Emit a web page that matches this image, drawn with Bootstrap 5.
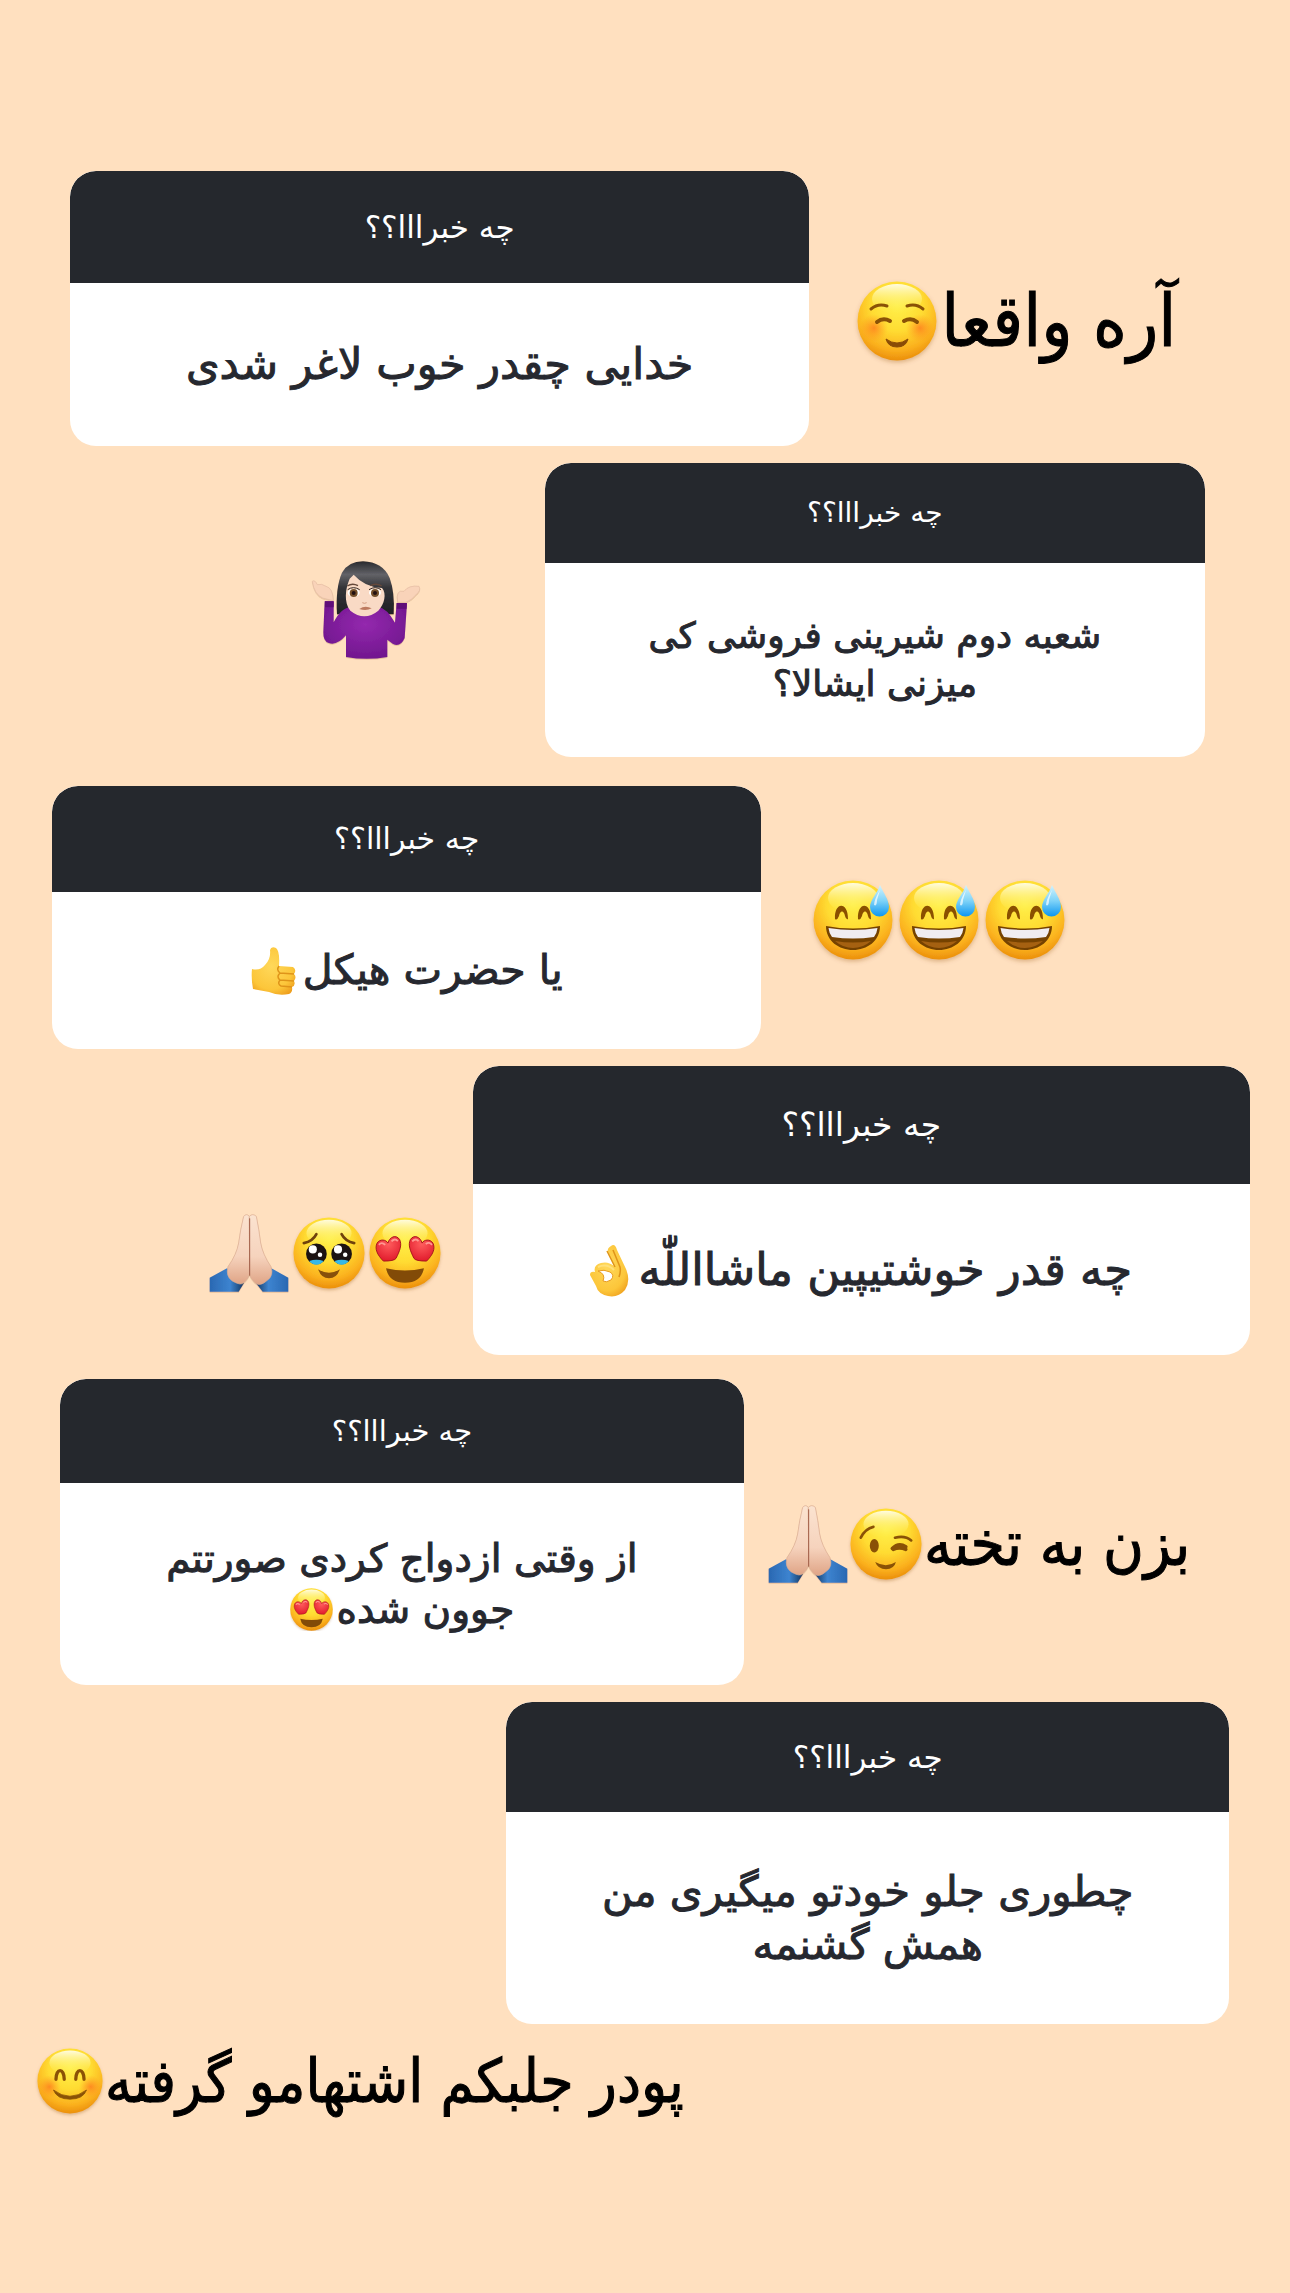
<!DOCTYPE html>
<html lang="fa">
<head>
<meta charset="utf-8">
<meta name="viewport" content="width=device-width, initial-scale=1">
<title>چه خبرااا؟؟</title>
<link href="https://cdn.jsdelivr.net/npm/bootstrap@5.3.0/dist/css/bootstrap.min.css" rel="stylesheet">
<style>
  body { background: #ffe0bf; font-family: "DejaVu Sans", sans-serif; color: #000; }
  .story { padding-top: 171px; padding-bottom: 100px; }
  .qa { --bs-card-border-width: 0; --bs-card-border-radius: 26px; --bs-card-inner-border-radius: 26px; --bs-card-bg: #fff; flex: none; overflow: hidden; }
  .qa .card-header { background: #25282d; color: #fff; font-size: var(--head); line-height: 40px; padding: var(--head-pad) 16px; }
  .qa .card-body { color: #26282f; font-size: var(--text); line-height: var(--line); padding: var(--body-pad) 16px; -webkit-text-stroke: 1px #26282f; }
  .qa-1 { width: 60.6%; --head: 31px; --head-pad: 36px; --text: 43px; --line: 55px; --body-pad: 54px; }
  .qa-2 { width: 54.8%; --head: 28px; --head-pad: 30px; --text: 36px; --line: 48px; --body-pad: 49px; }
  .qa-3 { width: 57.3%; --head: 30px; --head-pad: 33px; --text: 41px; --line: 53px; --body-pad: 52px; }
  .qa-4 { width: 62.2%; --head: 33px; --head-pad: 39px; --text: 45px; --line: 57px; --body-pad: 57px; }
  .qa-5 { width: 55.6%; --head: 29px; --head-pad: 32px; --text: 39px; --line: 51px; --body-pad: 50px; }
  .qa-6 { width: 58.8%; --head: 31px; --head-pad: 35px; --text: 42px; --line: 53px; --body-pad: 53px; }
  .start-1 { padding-left: 70px; } .start-3 { padding-left: 52px; } .start-5 { padding-left: 60px; } .start-7 { padding-left: 37px; }
  .end-2 { padding-right: 85px; } .end-4 { padding-right: 40px; } .end-6 { padding-right: 61px; }
  .gap-s { margin-bottom: 17px; } .gap-m { margin-bottom: 24px; } .gap-l { margin-bottom: 29px; }
  .answer { font-family: "DejaVu Sans Condensed", "DejaVu Sans", sans-serif; font-size: 60px; line-height: 80px; white-space: nowrap; -webkit-text-stroke: 1px #000; }
  .answer-lg { font-size: 72px; }
  .answer-md { font-size: 62px; }
  .answer-low { padding-top: 84px; }
  .answer-mid { margin-right: 124px; }
  .emo-row { gap: 6px; }
  .emo-tight { gap: 2px; }
  .emo { display: block; flex: none; width: 80px; height: 80px; overflow: visible; }
  .emo-md { width: 72px; height: 72px; }
  .emo-sm { width: 66px; height: 66px; }
  .emo-shrug { width: 110px; height: 100px; }
  .emo-in { display: inline-block; width: 43px; height: 43px; vertical-align: -8px; }
  .emo-thumb { display: inline-block; width: 46px; height: 48px; margin-right: 6px; vertical-align: -11px; }
  .emo-okay { display: inline-block; width: 40px; height: 52px; vertical-align: -12px; }
</style>
</head>
<body>
<svg width="0" height="0" class="position-absolute" aria-hidden="true">
  <defs>
    <radialGradient id="skin" cx=".5" cy=".3" r=".72"><stop offset="0" stop-color="#fff04a"/><stop offset=".45" stop-color="#ffdc32"/><stop offset=".78" stop-color="#fbb11e"/><stop offset="1" stop-color="#e98a08"/></radialGradient>
    <linearGradient id="shine" x2="0" y2="1"><stop offset="0" stop-color="#fffce0"/><stop offset="1" stop-color="#fff04a" stop-opacity="0"/></linearGradient>
    <radialGradient id="blush"><stop offset="0" stop-color="#ff6a1c" stop-opacity=".65"/><stop offset="1" stop-color="#ff8a1c" stop-opacity="0"/></radialGradient>
    <linearGradient id="drop" x2="0" y2="1"><stop offset="0" stop-color="#d2f4ff"/><stop offset=".5" stop-color="#7fd3f8"/><stop offset="1" stop-color="#0c96f0"/></linearGradient>
    <radialGradient id="heart" cx=".5" cy=".3" r=".8"><stop offset="0" stop-color="#ff5d5d"/><stop offset="1" stop-color="#dd1226"/></radialGradient>
    <linearGradient id="palm" x2="0" y2="1"><stop offset="0" stop-color="#fbe3d0"/><stop offset=".6" stop-color="#f6d3bd"/><stop offset="1" stop-color="#dfa486"/></linearGradient>
    <linearGradient id="cuffL"><stop offset="0" stop-color="#2a68b2"/><stop offset=".6" stop-color="#3d84d0"/><stop offset="1" stop-color="#12365f"/></linearGradient>
    <linearGradient id="cuffR"><stop offset="0" stop-color="#12365f"/><stop offset=".4" stop-color="#3d84d0"/><stop offset="1" stop-color="#2a68b2"/></linearGradient>
    <radialGradient id="purple" cx=".5" cy=".4" r=".7"><stop offset="0" stop-color="#9429ae"/><stop offset="1" stop-color="#6b1389"/></radialGradient>
    <linearGradient id="hair" x2="0" y2="1"><stop offset="0" stop-color="#292a2e"/><stop offset=".25" stop-color="#626267"/><stop offset=".5" stop-color="#333438"/><stop offset="1" stop-color="#202124"/></linearGradient>
    <radialGradient id="hand" cx=".45" cy=".4" r=".7"><stop offset="0" stop-color="#ffd85a"/><stop offset=".7" stop-color="#fcc63a"/><stop offset="1" stop-color="#ee9d1c"/></radialGradient>
    <filter id="soft" x="-20%" y="-20%" width="140%" height="150%"><feDropShadow dx="0" dy="2" stdDeviation="2" flood-color="#8a4a10" flood-opacity=".3"/></filter>
  </defs>
  <symbol id="ball" viewBox="0 0 80 80" overflow="visible"><circle cx="40" cy="40" r="39.500" fill="url(#skin)" filter="url(#soft)"/><ellipse cx="40" cy="18" rx="25" ry="15" fill="url(#shine)"/></symbol>
  <symbol id="calm" viewBox="0 0 80 80" overflow="visible"><use href="#ball"/><circle cx="17" cy="47" r="14" fill="url(#blush)"/><circle cx="63" cy="47" r="14" fill="url(#blush)"/><g fill="none" stroke="#8a5206" stroke-width="3" stroke-linecap="round"><path d="M14 28Q21 22 30 25M50 25Q59 22 66 28"/><path stroke-width="4" d="M20 41Q26 36 33 40M47 40Q54 36 60 41"/></g><path d="M29 58Q40 66 51 58Q49 66 40 66T29 58Z" fill="#8a4c06" stroke="#8a4c06"/></symbol>
  <symbol id="sweat" viewBox="0 0 80 80" overflow="visible"><use href="#ball"/><g fill="#8a5000"><path d="M22 39C21 22 35 21 35 39Q33 40 32 36C31 30 27 30 26 36Q24 41 22 39ZM45 39C44 22 58 21 58 39Q56 40 55 36C54 30 50 30 49 36Q47 41 45 39Z"/><path fill="#754200" d="M13 46Q40 51 67 46C67 61 54 70 40 70S13 61 13 46Z"/></g><path d="M15.500 48Q40 52 64.500 48Q64 53 61 57Q40 60 19 57Q16 53 15.500 48Z" fill="#f0edf1"/><path d="M22 61Q40 64 58 61Q50 68 40 68T22 61Z" fill="#a56111"/><path d="M67 5C71 14 76 20 76 27A9.500 9.500 0 0 1 57 27C57 20 64 14 67 5Z" fill="url(#drop)"/><path d="M67 10Q61 20 61 25Q64 27 64 20Z" fill="#fff" opacity=".7"/></symbol>
  <symbol id="love" viewBox="0 0 80 80" overflow="visible"><use href="#ball"/><path id="lh" d="M16 49C9 42 6 35 9 29C12 24 19 25 21 29C23 22 30 19 34 25C37 31 34 38 30 46Q28 49 16 49Z" fill="url(#heart)" stroke="#9f1018"/><use href="#lh" transform="matrix(-1 0 0 1 80 0)"/><path d="M11 31Q14 27 18 31M25 27Q29 23 32 27M48 27Q52 23 55 27M63 30Q67 27 70 31" stroke="#ff9a92" stroke-width="2" fill="none"/><path d="M19 57Q40 62 61 57Q58 73 40 73T19 57Z" fill="#824b08"/></symbol>
  <symbol id="plead" viewBox="0 0 80 80" overflow="visible"><use href="#ball"/><g fill="none" stroke="#70420c" stroke-width="3" stroke-linecap="round"><path d="M12 29Q22 27 26 19M54 19Q58 27 68 29"/></g><g id="pe"><circle cx="26" cy="41" r="11.500" fill="#1c1212"/><path d="M18 49Q26 46 34 49Q31 53 26 53T18 49Z" fill="#35b8e8"/><circle cx="22" cy="36" r="4.500" fill="#fff"/><circle cx="30" cy="42" r="2.500" fill="#fff"/></g><use href="#pe" x="28"/><path d="M28 58Q40 66 52 58Q49 68 40 68T28 58Z" fill="#87500b"/></symbol>
  <symbol id="wink" viewBox="0 0 80 80" overflow="visible"><use href="#ball"/><ellipse cx="27" cy="42" rx="5" ry="7.500" fill="#8a5206"/><g fill="none" stroke="#8a5206" stroke-linecap="round"><path stroke-width="3" d="M12 33Q17 23 26 21M50 33Q61 30 68 36"/><path stroke-width="4" d="M47 45Q54 38 62 43M48 46Q55 43 62 46"/></g><path d="M28 60Q40 67 51 60Q49 68 40 68T28 60Z" fill="#8a5206"/></symbol>
  <symbol id="smile" viewBox="0 0 80 80" overflow="visible"><use href="#ball"/><circle cx="15" cy="47" r="14" fill="url(#blush)"/><circle cx="65" cy="47" r="14" fill="url(#blush)"/><g fill="none" stroke="#8a5206" stroke-width="4" stroke-linecap="round"><path d="M23 38C23 24 33 24 33 38M47 38C47 24 57 24 57 38"/></g><path d="M20 51Q40 66 60 51Q56 62 40 62T20 51Z" fill="#8a5206" stroke="#8a5206"/></symbol>
  <symbol id="pray" viewBox="45 68 240 240" overflow="visible"><g filter="url(#soft)"><path d="M99 234L47 262V304H134L150 278Z" fill="url(#cuffL)"/><path d="M232 234L283 262V304H206L184 276Z" fill="url(#cuffR)"/><path d="M166 78Q158 68 149 78Q139 118 134 158Q128 192 102 229Q94 258 115 272Q142 288 151 276Q163 264 167 252Z" fill="url(#palm)" stroke="#dcae93" stroke-width="2"/><path d="M166 78Q176 68 187 78Q195 118 200 158Q206 192 231 229Q240 256 220 270Q198 290 184 278Q169 264 167 252Z" fill="url(#palm)" stroke="#dcae93" stroke-width="2"/><path d="M167 84V256" stroke="#9f5c45" stroke-width="3"/></g></symbol>
  <symbol id="shrug" viewBox="90 92 330 300" overflow="visible"><g filter="url(#soft)"><path d="M168 255Q163 175 183 130Q203 96 246 96Q305 98 326 146Q342 190 338 255Z" fill="url(#hair)"/><path d="M125 206Q100 196 94 156Q101 150 109 166Q122 162 135 171Q156 176 157 214Z" fill="#f9d3b9" stroke="#e6bda3" stroke-width="2"/><path d="M350 219Q343 180 369 186Q383 167 414 171Q421 184 405 196Q393 212 374 219Z" fill="#f9d3b9" stroke="#e6bda3" stroke-width="2"/><path d="M131 216H158V279Q180 234 213 232H292Q318 237 342 280L347 221H378L371 326Q359 354 336 344L319 331V383Q257 394 195 383V318Q168 350 143 341Q126 336 127 309Z" fill="url(#purple)"/><path d="M132 216H158V234H132ZM347 221H377V238H347Z" fill="#5f0d78"/><path d="M206 148C193 178 188 219 208 244Q250 278 292 244C310 225 318 193 303 176Q252 174 218 136Z" fill="#f9dac5"/></g><ellipse cx="218" cy="190" rx="18" ry="12" fill="#fff"/><ellipse cx="282" cy="190" rx="18" ry="12" fill="#fff"/><circle cx="218" cy="191" r="12" fill="#75502a"/><circle cx="282" cy="191" r="12" fill="#75502a"/><circle cx="218" cy="191" r="6" fill="#221111"/><circle cx="282" cy="191" r="6" fill="#221111"/><path d="M200 181Q217 169 236 181M264 181Q283 169 300 181" fill="none" stroke="#30231e" stroke-width="3"/><path d="M199 170Q214 160 231 169M268 169Q287 160 302 170" fill="none" stroke="#65483a" stroke-width="4"/><path d="M244 220Q250 224 257 220" fill="none" stroke="#d49e83" stroke-width="3"/><path d="M235 239Q252 226 272 237Q256 246 235 239Z" fill="#bd7a5f"/></symbol>
  <symbol id="thumb" viewBox="0 0 46 48" overflow="visible"><path d="M1 22Q9 24 14 18Q20 12 19 3Q20-1 25 1Q29 4 28 19L42 20Q46 23 43 27Q46 30 43 34Q45 38 41 40Q42 45 38 47Q27 49 18 45L2 42Q0 31 1 22Z" fill="url(#hand)"/><path d="M28 19Q25 23 29 26L43 27M43 34L29 33Q25 30 29 26M29 33Q26 37 30 39L41 40" fill="none" stroke="#df9419" stroke-width="1.500"/></symbol>
  <symbol id="okay" viewBox="0 0 40 52" overflow="visible"><path d="M21 1Q25-2 27 5L36 24Q41 36 35 45Q28 53 18 51Q8 49 6 41L0 30Q0 26 5 27Q3 20 11 18Q18 16 24 21L18 7Q17 3 21 1Z" fill="url(#hand)"/><path d="M8 26Q14 24 20 27Q25 30 21 35Q16 38 13 36Q16 29 8 26Z" fill="#fff" stroke="#e89b1e"/><path d="M23 5L30 22Q31 27 29 32M17 6L25 22" fill="none" stroke="#df9419" stroke-width="1.500"/><path d="M8 22Q17 18 24 25" fill="none" stroke="#ffe07a" stroke-width="2"/></symbol>
</svg>

<main class="story d-flex flex-column">
  <section class="d-flex align-items-center start-1 gap-s">
    <article class="card qa qa-1 text-center" dir="rtl">
      <div class="card-header">چه خبرااا؟؟</div>
      <div class="card-body">خدایی چقدر خوب لاغر شدی</div>
    </article>
    <div class="answer answer-lg d-flex align-items-center ms-5 pt-4" dir="rtl"><span>آره واقعا</span><svg class="emo me-1" role="img" aria-label="☺️"><use href="#calm"/></svg></div>
  </section>

  <section class="d-flex align-items-center justify-content-end end-2 gap-l">
    <div class="answer answer-mid"><svg class="emo emo-shrug" role="img" aria-label="🤷🏻‍♀️"><use href="#shrug"/></svg></div>
    <article class="card qa qa-2 text-center" dir="rtl">
      <div class="card-header">چه خبرااا؟؟</div>
      <div class="card-body">شعبه دوم شیرینی فروشی کی<br>میزنی ایشالا؟</div>
    </article>
  </section>

  <section class="d-flex align-items-center start-3 gap-s">
    <article class="card qa qa-3 text-center" dir="rtl">
      <div class="card-header">چه خبرااا؟؟</div>
      <div class="card-body">یا حضرت هیکل<svg class="emo-thumb" role="img" aria-label="👍"><use href="#thumb"/></svg></div>
    </article>
    <div class="answer d-flex ms-5 ps-1 pt-1 emo-row"><svg class="emo" role="img" aria-label="😅"><use href="#sweat"/></svg><svg class="emo" role="img" aria-label="😅"><use href="#sweat"/></svg><svg class="emo" role="img" aria-label="😅"><use href="#sweat"/></svg></div>
  </section>

  <section class="d-flex align-items-center justify-content-end end-4 gap-m">
    <div class="answer answer-low d-flex align-items-center gap-1 me-4 pe-2"><svg class="emo" role="img" aria-label="🙏🏻"><use href="#pray"/></svg><svg class="emo emo-md" role="img" aria-label="🥹"><use href="#plead"/></svg><svg class="emo emo-md" role="img" aria-label="😍"><use href="#love"/></svg></div>
    <article class="card qa qa-4 text-center" dir="rtl">
      <div class="card-header">چه خبرااا؟؟</div>
      <div class="card-body">چه قدر خوشتیپین ماشااللّٰه<svg class="emo-okay me-2" role="img" aria-label="👌"><use href="#okay"/></svg></div>
    </article>
  </section>

  <section class="d-flex align-items-center start-5 gap-s">
    <article class="card qa qa-5 text-center" dir="rtl">
      <div class="card-header">چه خبرااا؟؟</div>
      <div class="card-body">از وقتی ازدواج کردی صورتتم<br>جوون شده<svg class="emo-in me-1" role="img" aria-label="😍"><use href="#love"/></svg></div>
    </article>
    <div class="answer answer-md d-flex align-items-center ms-4 pt-4 emo-tight" dir="rtl"><span>بزن به تخته</span><svg class="emo emo-md" role="img" aria-label="😉"><use href="#wink"/></svg><svg class="emo" role="img" aria-label="🙏🏻"><use href="#pray"/></svg></div>
  </section>

  <section class="d-flex justify-content-end end-6 gap-s">
    <article class="card qa qa-6 text-center" dir="rtl">
      <div class="card-header">چه خبرااا؟؟</div>
      <div class="card-body">چطوری جلو خودتو میگیری من<br>همش گشنمه</div>
    </article>
  </section>

  <section class="d-flex start-7">
    <div class="answer d-flex align-items-center emo-tight" dir="rtl"><span>پودر جلبکم اشتهامو گرفته</span><svg class="emo emo-sm" role="img" aria-label="😊"><use href="#smile"/></svg></div>
  </section>
</main>
<script src="https://cdn.jsdelivr.net/npm/bootstrap@5.3.0/dist/js/bootstrap.bundle.min.js"></script>
</body>
</html>
